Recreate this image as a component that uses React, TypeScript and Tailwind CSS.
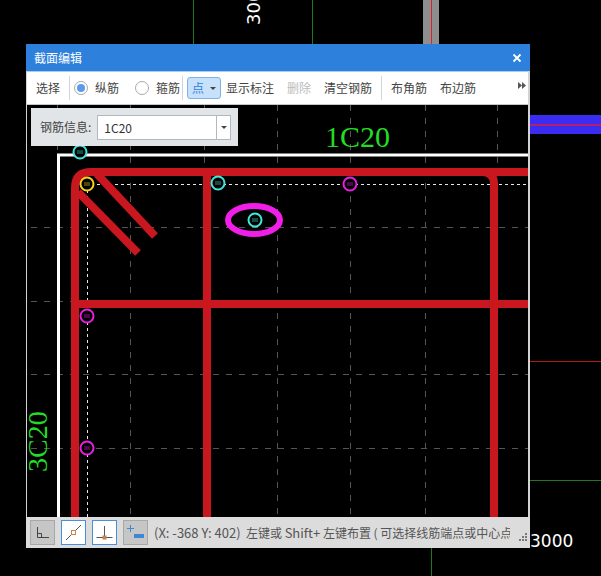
const cjk = "font-['Noto_Sans_CJK_SC','Noto_Sans',sans-serif]";

function Marker({ x, y, color, r = 6.5 }: { x: number; y: number; color: string; r?: number }) {
  return (
    <g>
      <circle cx={x} cy={y} r={r} fill="#000" stroke={color} strokeWidth={2} />
      <path d={`M${x - 3} ${y - 1}h6M${x - 3} ${y + 1}h6`} stroke={color} strokeWidth={0.8} opacity={0.8} />
    </g>
  );
}

function Section() {
  const vertical = [57, 130, 204, 277, 350, 425, 497];
  const horizontal = [227, 301, 374, 448];
  return (
    <svg className="block" width={501} height={412} viewBox="27 105 501 412">
      {vertical.map((x) => (
        <line key={x} x1={x + 0.5} y1={105} x2={x + 0.5} y2={517} stroke="#555" strokeDasharray="6 7" />
      ))}
      {horizontal.map((y) => (
        <line key={y} x1={31} y1={y + 0.5} x2={528} y2={y + 0.5} stroke="#555" strokeDasharray="6 7" />
      ))}
      <path d="M58.5 517V155H528" fill="none" stroke="#fff" strokeWidth={3} />
      <path d="M87.5 517V184.5H528" fill="none" stroke="#e8e8e8" strokeDasharray="3 3" />
      <g fill="none" stroke="#c8171f" strokeWidth={8}>
        <path d="M75 517V188Q75 172 91 172H528" />
        <path d="M207 172V517" />
        <path d="M482 172Q494 172 494 184V517" />
        <path d="M75 304H528" />
        <path d="M97 174L155 236" />
        <path d="M78 192L138 253" />
      </g>
      <ellipse cx={254} cy={220} rx={26} ry={14} fill="none" stroke="#f01ee6" strokeWidth={6} />
      <Marker x={80} y={152} color="#3fe8dc" />
      <Marker x={87} y={184} color="#f5d21e" />
      <Marker x={218} y={183} color="#3fe8dc" />
      <Marker x={350} y={184} color="#e81ee0" />
      <Marker x={255} y={220} color="#3fe8dc" />
      <Marker x={87} y={316} color="#e81ee0" />
      <Marker x={87} y={448} color="#e81ee0" />
      <text x={325} y={147} fill="#22dd22" fontSize={30} fontFamily="Liberation Serif, serif">1C20</text>
      <text transform="translate(47 472) rotate(-90)" fill="#22dd22" fontSize={28} fontFamily="Liberation Serif, serif">3C20</text>
    </svg>
  );
}

function Radio({ checked, label }: { checked?: boolean; label: string }) {
  return (
    <div className="flex items-center gap-[7px]">
      <span className="flex h-[14px] w-[14px] items-center justify-center rounded-full border border-[#aaa] bg-white">
        {checked && <span className="h-[8px] w-[8px] rounded-full bg-[#5b9bea]" />}
      </span>
      <span>{label}</span>
    </div>
  );
}

function StatusIcon({ active, children }: { active?: boolean; children: React.ReactNode }) {
  return (
    <div
      className={
        "h-[25px] w-[25px] shrink-0 border " +
        (active ? "border-[#4a90d9] bg-white" : "border-[#a8a8a8] bg-[#c6c6c6]")
      }
    >
      <svg width={23} height={23} viewBox="0 0 23 23">
        {children}
      </svg>
    </div>
  );
}

function Divider() {
  return <div className="h-[24px] w-px bg-[#cfd4d8]" />;
}

export default function App() {
  return (
    <div className={"relative h-[576px] w-[601px] overflow-hidden bg-black " + cjk}>
      <svg className="absolute left-0 top-0" width={601} height={576}>
        <line x1={193.5} y1={0} x2={193.5} y2={44} stroke="#1f7a1f" />
        <line x1={312.5} y1={0} x2={312.5} y2={44} stroke="#1f7a1f" />
        <rect x={423} y={0} width={16} height={44} fill="#8e8e8e" />
        <line x1={431.5} y1={0} x2={431.5} y2={44} stroke="#d8242c" />
        <rect x={530} y={115} width={71} height={19} fill="#3a2cf0" />
        <line x1={530} y1={125} x2={601} y2={125} stroke="#b0206c" strokeWidth={2} />
        <line x1={530} y1={361.5} x2={601} y2={361.5} stroke="#b01818" />
        <line x1={530} y1={480.5} x2={601} y2={480.5} stroke="#1f7a1f" />
        <line x1={431.5} y1={548} x2={431.5} y2={576} stroke="#1f7a1f" />
        <text transform="translate(260 25) rotate(-90)" fill="#fff" fontSize={18} fontFamily="DejaVu Sans, sans-serif">3000</text>
        <text x={530} y={547} fill="#fff" fontSize={17} fontFamily="DejaVu Sans, sans-serif">3000</text>
      </svg>

      <div className="absolute left-[26px] top-[44px] flex h-[504px] w-[504px] flex-col border-r-2 border-l border-[#d0d2d4] bg-black">
        <div className="-ml-px -mr-[2px] flex h-[27px] shrink-0 items-center justify-between bg-[#2e80dd] pl-[8px] pr-[8px] text-[12px] text-white">
          <span>截面编辑</span>
          <svg width={10} height={10} viewBox="0 0 10 10">
            <path d="M1.5 1.5l7 7M8.5 1.5l-7 7" stroke="#fff" strokeWidth={1.8} />
          </svg>
        </div>
        <div className="flex h-[34px] shrink-0 items-center whitespace-nowrap border-y border-b-[#c4c8cc] border-t-[#a9cdf2] bg-white pl-[9px] text-[12px] text-[#444]">
          <span className="mr-[9px]">选择</span>
          <Divider />
          <div className="ml-[4px] mr-[16px]">
            <Radio checked label="纵筋" />
          </div>
          <Radio label="箍筋" />
          <div className="ml-[2px]"><Divider /></div>
          <div className="ml-[4px] flex h-[22px] w-[34px] items-center justify-center gap-[6px] rounded-[3px] border border-[#7fb2e8] bg-[#c8e1fa] text-[#2e80dd]">
            <span>点</span>
            <span className="h-0 w-0 border-x-[3px] border-t-[3px] border-x-transparent border-t-[#444]" />
          </div>
          <span className="ml-[5px]">显示标注</span>
          <span className="ml-[13px] text-[#bbb]">删除</span>
          <span className="ml-[13px]">清空钢筋</span>
          <div className="ml-[9px]"><Divider /></div>
          <span className="ml-[9px]">布角筋</span>
          <span className="ml-[13px]">布边筋</span>
          <svg className="ml-[42px] mb-[6px]" width={8} height={7} viewBox="0 0 8 7" fill="#555">
            <path d="M0 0l4 3.5L0 7zM4 0l4 3.5L4 7z" />
          </svg>
        </div>

        <div className="relative min-h-0 flex-1 overflow-hidden">
          <Section />
          <div className="absolute left-[4px] top-[3px] flex h-[38px] w-[207px] items-center whitespace-nowrap bg-[#e1e5e8] pl-[9px] text-[12px] text-[#444]">
            <span>钢筋信息:</span>
            <div className="ml-[6px] flex h-[25px] w-[134px] border border-[#b4b8bc] bg-white">
              <span className="flex-1 pl-[6px] leading-[23px] text-[#333]">1C20</span>
              <div className="flex w-[14px] items-center justify-center border-l border-[#b4b8bc]">
                <span className="h-0 w-0 border-x-[3px] border-t-[3px] border-x-transparent border-t-[#444]" />
              </div>
            </div>
          </div>
        </div>

        <div className="-ml-px -mr-[2px] flex h-[31px] shrink-0 items-center gap-[6px] bg-[#dcdcdc] pl-[4px] text-[12px] text-[#555]">
          <StatusIcon>
            <path d="M6.5 6v10.5H18M6.5 12.5h4v4" fill="none" stroke="#444" />
          </StatusIcon>
          <StatusIcon active>
            <path d="M4 19L19 4" stroke="#555" />
            <rect x={9.5} y={9.5} width={4} height={4} fill="#fff" stroke="#c8824a" />
          </StatusIcon>
          <StatusIcon active>
            <path d="M11.5 5v11M3.5 16.5h16" stroke="#555" />
            <rect x={9.5} y={14.5} width={4} height={4} fill="#c8824a" />
          </StatusIcon>
          <StatusIcon>
            <path d="M3 7.5h7M6.5 4v7" stroke="#3f86d6" />
            <rect x={10} y={13} width={10} height={4} fill="#3f86d6" />
          </StatusIcon>
          <div className="w-[356px] overflow-hidden whitespace-pre">
            <span className="text-[13px]">(X: -368 Y: 402)</span>
            {"  左键或 "}
            <span className="text-[13px]">Shift+</span>
            {" 左键布置 ( 可选择线筋端点或中心点"}
          </div>
          <svg className="ml-auto mr-[2px] mt-[10px] shrink-0" width={9} height={9} viewBox="0 0 9 9" fill="#777">
            <rect x={6} y={0} width={2} height={2} />
            <rect x={3} y={3} width={2} height={2} />
            <rect x={6} y={3} width={2} height={2} />
            <rect x={0} y={6} width={2} height={2} />
            <rect x={3} y={6} width={2} height={2} />
            <rect x={6} y={6} width={2} height={2} />
          </svg>
        </div>
      </div>
    </div>
  );
}
